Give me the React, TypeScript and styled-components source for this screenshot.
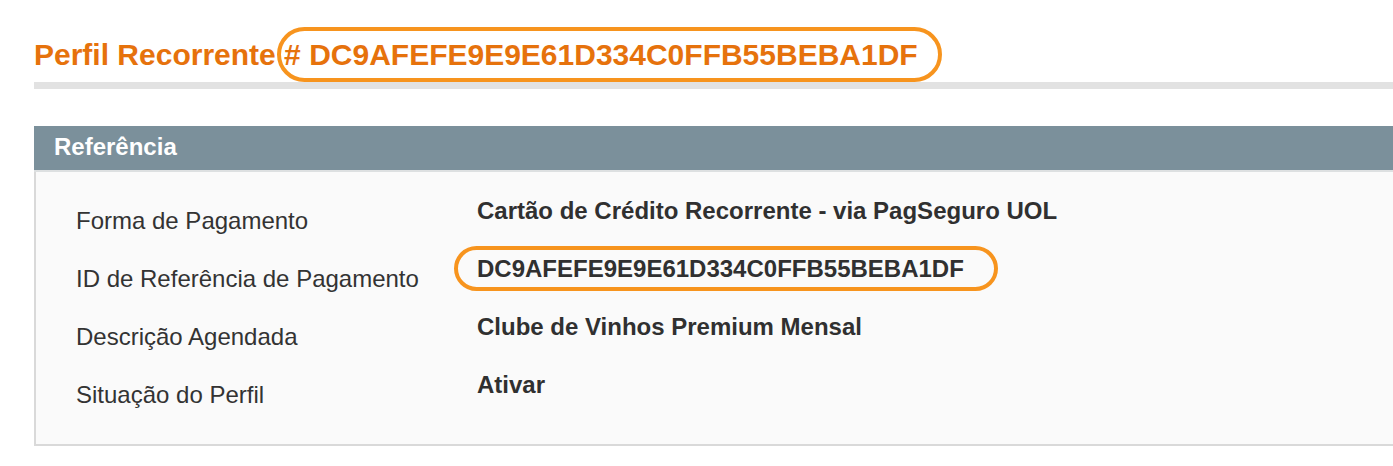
import { Fragment } from 'react'
import styled, { createGlobalStyle } from 'styled-components'

const GlobalStyle = createGlobalStyle`
  html, body {
    margin: 0;
    padding: 0;
    background: #ffffff;
    overflow: hidden;
  }
  body {
    font-family: 'Liberation Sans', Arial, Helvetica, sans-serif;
  }
`

const Page = styled.div`
  padding-left: 34px;
  width: 1420px;
`

const TitleBar = styled.h1`
  margin: 0;
  padding: 38px 0 10px;
  font-size: 30px;
  line-height: 34px;
  font-weight: 700;
  color: #e6720c;
  border-bottom: 7px solid #e2e2e2;
`

// hand-drawn style highlight ring over a piece of text
const Marked = styled.span<{ $inset: string }>`
  position: relative;

  &::after {
    content: '';
    position: absolute;
    inset: ${(p) => p.$inset};
    border: 4px solid #f7941e;
    border-radius: 30px;
    pointer-events: none;
  }
`

const Panel = styled.section`
  margin-top: 37px;
`

const PanelHeader = styled.h2`
  margin: 0;
  padding: 0 20px 2px;
  line-height: 42px;
  font-size: 24px;
  font-weight: 700;
  color: #ffffff;
  background: #7b909b;
  border-bottom: 2px solid #dde0e1;
`

const PanelBody = styled.div`
  background: #fafafa;
  border-left: 2px solid #d9d9d9;
  border-bottom: 2px solid #d9d9d9;
  padding: 25px 0 35px 40px;
`

const Fields = styled.dl`
  margin: 0;
  display: grid;
  grid-template-columns: 401px 1fr;
  row-gap: 20px;
  font-size: 24px;
  line-height: 28px;
`

const Label = styled.dt`
  margin: 0;
  padding-top: 10px;
  color: #333333;
`

const Value = styled.dd`
  margin: 0;
  font-weight: 700;
  color: #303030;
`

const fields = [
  { label: 'Forma de Pagamento', value: 'Cartão de Crédito Recorrente - via PagSeguro UOL' },
  { label: 'ID de Referência de Pagamento', value: 'DC9AFEFE9E9E61D334C0FFB55BEBA1DF', marked: true },
  { label: 'Descrição Agendada', value: 'Clube de Vinhos Premium Mensal' },
  { label: 'Situação do Perfil', value: 'Ativar' },
]

export default function App() {
  return (
    <>
      <GlobalStyle />
      <Page>
        <TitleBar>
          Perfil Recorrente{' '}
          <Marked $inset="-11px -24px -11px -7px"># DC9AFEFE9E9E61D334C0FFB55BEBA1DF</Marked>
        </TitleBar>
        <Panel>
          <PanelHeader>Referência</PanelHeader>
          <PanelBody>
            <Fields>
              {fields.map((f) => (
                <Fragment key={f.label}>
                  <Label>{f.label}</Label>
                  <Value>
                    {f.marked ? <Marked $inset="-9px -34px -9px -23px">{f.value}</Marked> : f.value}
                  </Value>
                </Fragment>
              ))}
            </Fields>
          </PanelBody>
        </Panel>
      </Page>
    </>
  )
}
